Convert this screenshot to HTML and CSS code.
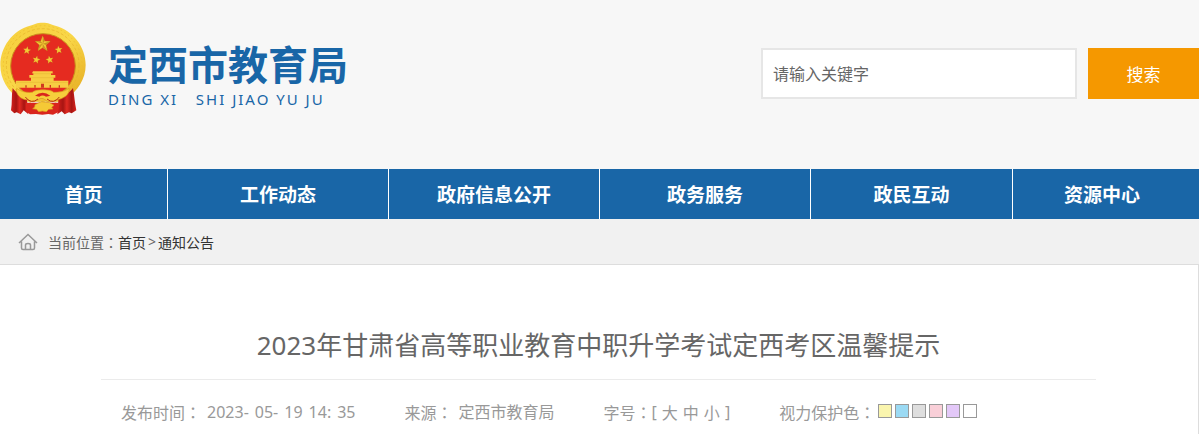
FILE: index.html
```html
<!DOCTYPE html>
<html lang="zh-CN">
<head>
<meta charset="utf-8">
<meta name="viewport" content="width=device-width, initial-scale=1">
<title>定西市教育局</title>
<link rel="stylesheet" href="styles.css">
</head>
<body>
<header class="header">
  <div class="brand">
    <svg class="emblem" viewBox="0 21 258 285" aria-hidden="true">
      <defs>
        <linearGradient id="gold" x1="0" y1="0" x2="1" y2="1">
          <stop offset="0" stop-color="#f6cf3c"/>
          <stop offset=".5" stop-color="#f9d748"/>
          <stop offset="1" stop-color="#e3a81f"/>
        </linearGradient>
        <linearGradient id="drape" x1="0" y1="0" x2="1" y2="0">
          <stop offset="0" stop-color="#d3201c"/>
          <stop offset=".3" stop-color="#a81512"/>
          <stop offset=".5" stop-color="#e02a22"/>
          <stop offset=".75" stop-color="#a81512"/>
          <stop offset="1" stop-color="#d8231d"/>
        </linearGradient>
        <path id="star" d="M0-24 6-8 23-7 10 4 14 21 0 12-14 21-10 4-23-7-6-8Z"/>
      </defs>
      <path fill="url(#gold)" d="M128 23c18 0 24 5 38 9 52 14 91 62 91 118 0 42-24 79-59 101l-18 9H76l-18-9C23 229 1 192 1 150 1 96 38 46 90 32c14-4 20-9 38-9Z"/>
      <circle cx="128" cy="150" r="109" fill="none" stroke="#e6b02a" stroke-width="2" stroke-dasharray="9 6"/>
      <circle cx="128" cy="150" r="118" fill="none" stroke="#edbd2d" stroke-width="2" stroke-dasharray="5 8"/>
      <circle cx="129" cy="153" r="97" fill="#e52b20" stroke="#c98f1c" stroke-width="3"/>
      <g fill="#f5c936" stroke="#a97817" stroke-width="1">
        <use href="#star" transform="translate(128 86)"/>
        <use href="#star" transform="translate(81 106) rotate(8) scale(.5)"/>
        <use href="#star" transform="translate(176 104) rotate(-8) scale(.5)"/>
        <use href="#star" transform="translate(109 134) rotate(12) scale(.5)"/>
        <use href="#star" transform="translate(149 134) rotate(-12) scale(.5)"/>
      </g>
      <path fill="#c99322" d="m128 86 0-24 6 16Zm0 0 23-7-13 11Zm0 0 14 21-14-9Zm0 0-14 21 4-17Zm0 0-23-7 17-1Z"/>
      <path fill="#f7cd43" d="M99 169h59v6h-5v5h13v8h-5v9h44v21H48v-21h45v-9h-5v-8h12v-5h-4Z"/>
      <path stroke="#dca62a" stroke-width="1" fill="none" d="M94 188h68M50 202h154M97 176h63"/>
      <path fill="#cf3a20" d="M123 206h9v12h-9zM103 210h4v8h-4zM149 210h4v8h-4zM76 211h4v7h-4zM176 211h4v7h-4z"/>
      <path fill="url(#drape)" d="M38 219c12 17 24 21 42 25l5 54-14-12-9 12-12-6-7 3-10-9c4-23 1-45 5-67Z"/>
      <path fill="url(#drape)" d="M219 219c-13 17-24 21-43 25l-4 54 13-9 9 9 13-6 8 3 14-9c-5-23-6-46-10-67Z"/>
      <path fill="#d9251d" d="M77 263h102l-5 29-15 7-14-2-18 2-19-2-18 1-13-9Z"/>
      <path fill="#f6cf3c" stroke="#d9981c" stroke-width="2" d="M50 220c15 11 30 13 47 12 7-10 57-10 64 0 17 0 32-2 46-12 4 18-18 34-40 34-8 8-23 8-32 0-7-5-14-5-21 0-10 8-23 8-31 0-18 2-38-16-33-34Z"/>
      <path fill="none" stroke="#b92c18" stroke-width="3" d="M76 246q17 23 38 6m64-6q-17 23-37 6"/>
      <path fill="#d9251d" d="M105 242q23-17 46 0l-13 3q-10-7-20 0Z"/>
      <path fill="#f5c936" stroke="#d9981c" stroke-width="2" d="m105 269 12-6 8-3 12 2 12 1 13 8-7 6 4 5-13 1-7 7-12-2-11 2-6-7-12-2 6-5Z"/>
    </svg>
    <div class="brand-text">
      <h1 class="brand-name">定西市教育局</h1>
      <p class="brand-latin">DING XI&nbsp;&nbsp; SHI JIAO YU JU</p>
    </div>
  </div>
  <form class="search" role="search">
    <input class="search-input" type="text" aria-label="请输入关键字" placeholder="请输入关键字">
    <button class="search-button" type="button">搜索</button>
  </form>
</header>
<nav class="nav">
  <a class="nav-link" href="#">首页</a>
  <a class="nav-link" href="#">工作动态</a>
  <a class="nav-link" href="#">政府信息公开</a>
  <a class="nav-link" href="#">政务服务</a>
  <a class="nav-link" href="#">政民互动</a>
  <a class="nav-link" href="#">资源中心</a>
</nav>
<div class="crumbs">
  <svg class="home" viewBox="0 0 20 18" aria-hidden="true">
    <path d="M1 10 10 1.500 19 10M3.500 8.500V15q0 1.500 1.500 1.500H15q1.500 0 1.500-1.500V8.500M7.500 16.500V12q0-1.500 2.500-1.500T12.500 12v4.500"/>
  </svg>
  <span>当前位置<span class="colon" lang="zh-TW">：</span></span><a href="#">首页</a><span class="crumb-sep">&gt;</span><a href="#">通知公告</a>
</div>
<main class="article">
  <h2 class="title">2023年甘肃省高等职业教育中职升学考试定西考区温馨提示</h2>
  <div class="meta">
    <div class="parts">
      <span>发布时间<span class="colon" lang="zh-TW">：</span></span>
      <span>2023-</span>
      <span>05-</span>
      <span>19</span>
      <span>14:</span>
      <span>35</span>
    </div>
    <div class="parts">
      <span>来源<span class="colon" lang="zh-TW">：</span></span>
      <span>定西市教育局</span>
    </div>
    <div class="sizes">
      <span>字号<span class="colon" lang="zh-TW">：</span></span>
      <div class="size-list">
        <span>[</span>
        <button class="size" type="button">大</button>
        <button class="size" type="button">中</button>
        <button class="size" type="button">小</button>
        <span>]</span>
      </div>
    </div>
    <div class="eye">
      <span>视力保护色<span class="colon" lang="zh-TW">：</span></span>
      <div class="swatches">
        <button class="swatch yellow" type="button" aria-label="黄色"></button>
        <button class="swatch blue" type="button" aria-label="蓝色"></button>
        <button class="swatch gray" type="button" aria-label="灰色"></button>
        <button class="swatch pink" type="button" aria-label="粉色"></button>
        <button class="swatch purple" type="button" aria-label="紫色"></button>
        <button class="swatch white" type="button" aria-label="白色"></button>
      </div>
    </div>
  </div>
</main>
</body>
</html>
```

FILE: styles.css
```css
* {
  box-sizing: border-box;
}

body {
  margin: 0;
  background: #fff;
  color: #666;
  font-family: "Noto Sans", "Noto Sans CJK SC", sans-serif;
}

h1, h2, p {
  margin: 0;
}

a {
  color: inherit;
  text-decoration: none;
}

button, input {
  font-family: inherit;
  border-radius: 0;
}

.colon {
  font-family: "Noto Sans CJK TC", sans-serif;
}

.header {
  display: flex;
  justify-content: space-between;
  align-items: flex-start;
  padding: 22px 0 52px;
  background: #f7f7f7;
}

.brand {
  display: flex;
  gap: 22px;
}

.emblem {
  width: 86px;
  height: 95px;
}

.brand-text {
  padding-top: 21px;
  color: #1966a7;
}

.brand-name {
  font-family: "Liberation Sans", "Noto Sans CJK SC", sans-serif;
  font-size: 40px;
  line-height: 46px;
  font-weight: 700;
}

.brand-latin {
  font-size: 15px;
  line-height: 20px;
  letter-spacing: 2px;
}

.search {
  display: flex;
  gap: 11px;
  padding-top: 26px;
}

.search-input {
  width: 316px;
  height: 51px;
  padding: 0 10px;
  border: 2px solid #e6e6e6;
  background: #fff;
  color: #666;
  font-size: 16px;
}

.search-input::placeholder {
  color: #666;
  opacity: 1;
}

.search-button {
  width: 111px;
  height: 51px;
  padding: 0;
  border: 0;
  background: #f59800;
  color: #fff;
  font-size: 17px;
}

.nav {
  display: grid;
  grid-template-columns: 168fr 221fr 211fr 211fr 202fr 178fr 8fr;
  background: #1966a7;
}

.nav-link {
  padding-top: 2px;
  border-right: 1px solid #fff;
  color: #fff;
  font-size: 19px;
  font-weight: 700;
  line-height: 48px;
  text-align: center;
}

.nav-link:last-child {
  border-right: 0;
}

.crumbs {
  display: flex;
  align-items: center;
  height: 45px;
  padding: 0 18px;
  background: #f1f1f1;
  font-size: 14px;
}

.crumbs a {
  color: #333;
}

.crumb-sep {
  padding: 0 2px;
}

.home {
  width: 20px;
  height: 18px;
  margin-right: 10px;
  fill: none;
  stroke: #999;
  stroke-width: 1.5;
}

.article {
  min-height: 170px;
  padding: 60px 102px 0 101px;
  border-top: 1px solid #ddd;
  border-right: 1px solid #ddd;
}

.title {
  padding-bottom: 14px;
  border-bottom: 1px solid #ebebeb;
  font-size: 26px;
  font-weight: 400;
  line-height: 40px;
  text-align: center;
}

.meta {
  display: flex;
  flex-wrap: wrap;
  column-gap: 49px;
  padding: 20px 20px 0;
  color: #999;
  font-size: 16px;
  line-height: 24px;
}

.parts {
  display: flex;
  gap: 6px;
}

.size-list {
  display: flex;
  gap: 5px;
}

.sizes,
.eye {
  display: flex;
}

.size {
  padding: 0;
  border: 0;
  background: none;
  color: inherit;
  font-size: 16px;
  line-height: 24px;
}

.swatches {
  display: flex;
  gap: 3px;
  padding: 4px 3px;
}

.swatch {
  width: 14px;
  height: 14px;
  padding: 0;
  border: 1px solid #999;
}

.yellow { background: #faf5ae; }
.blue { background: #9bdaf4; }
.gray { background: #dedede; }
.pink { background: #f9cfd8; }
.purple { background: #e3c8f8; }
.white { background: #fff; }
```
